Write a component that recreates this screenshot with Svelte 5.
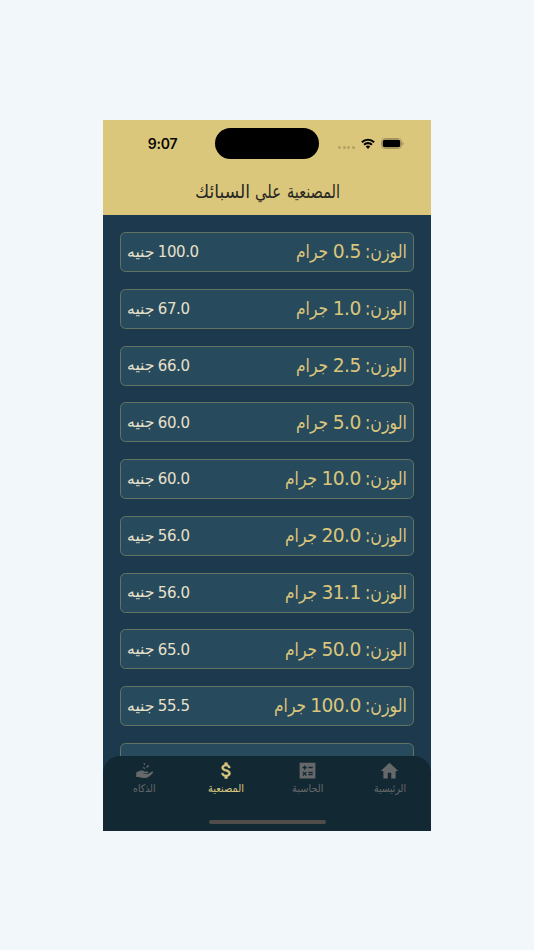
<script lang="ts">
	const rows = [
		{ weight: '0.5', price: '100.0' },
		{ weight: '1.0', price: '67.0' },
		{ weight: '2.5', price: '66.0' },
		{ weight: '5.0', price: '60.0' },
		{ weight: '10.0', price: '60.0' },
		{ weight: '20.0', price: '56.0' },
		{ weight: '31.1', price: '56.0' },
		{ weight: '50.0', price: '65.0' },
		{ weight: '100.0', price: '55.5' }
	]

	const tabs = [
		{ id: 'home', label: 'الرئيسية', width: 32 },
		{ id: 'calculator', label: 'الحاسبة', width: 31.5 },
		{ id: 'fees', label: 'المصنعية', width: 36 },
		{ id: 'zakat', label: 'الذكاه', width: 22.5 }
	]

	let active = 'fees'
</script>

<!-- one word fitted to a fixed width -->
{#snippet word(text: string, width: number)}
	<svg class="word" {width}>
		<text x={width} y="1em" textLength={width} lengthAdjust="spacingAndGlyphs">{text}</text>
	</svg>
{/snippet}

<main>
	<div class="phone">
		<header>
			<div class="statusBar">
				<span class="time">9:07</span>
				<div class="island"></div>
				<div class="signals">
					<div class="dots"><i></i><i></i><i></i><i></i></div>
					<svg class="wifi" viewBox="0 0 14 11">
						<path d="M.9 4.200a8.700 8.700 0 0 1 12.200 0M3.100 6.700a5.600 5.600 0 0 1 7.800 0" fill="none" stroke="#000" stroke-width="2.100" />
						<path d="M4.800 8.600a3.200 3.200 0 0 1 4.400 0L7 10.900z" />
					</svg>
					<svg class="battery" viewBox="0 0 23 11">
						<rect x=".5" y=".5" width="20" height="10" rx="3.200" fill="none" stroke="#a3945b" />
						<rect x="1.700" y="1.800" width="17.600" height="7.400" rx="2" />
						<path d="M21.500 4v3.400q1.300-.5 1.300-1.700T21.500 4z" fill="#a3945b" />
					</svg>
				</div>
			</div>
			<h1>
				{@render word('المصنعية', 53)}
				{@render word('علي', 26)}
				{@render word('السبائك', 55)}
			</h1>
		</header>

		<section class="list">
			{#each rows as row}
				<div class="row">
					<p class="weight">
						{@render word('الوزن:', 42)}
						<b>{row.weight}</b>
						{@render word('جرام', 32)}
					</p>
					<p class="price">
						<b>{row.price}</b>
						{@render word('جنيه', 27.5)}
					</p>
				</div>
			{/each}
			<div class="row"></div>
		</section>

		<nav>
			<div class="tabs">
				{#each tabs as tab}
					<button class="tab {tab.id}" class:active={active === tab.id} on:click={() => (active = tab.id)}>
						<svg class="icon" viewBox="0 0 24 24" fill="currentColor">
							{#if tab.id === 'home'}
								<path d="M10 21v-6.500h4V21h5v-8.500h3L12 3 2 12.500h3V21z" />
							{:else if tab.id === 'calculator'}
								<path
									fill-rule="evenodd"
									d="M3 3h18v18H3zM8 6.200v1.600H6.200v1.500H8V11h1.500V9.300h1.700V7.800H9.500V6.200zM13 7.800v1.500h5V7.800zM13 13.500V15h5v-1.500zM13 16v1.500h5V16zM6.200 14.200 7.700 15.700 6.200 17.200 7.200 18.200 8.700 16.700 10.200 18.200 11.200 17.200 9.700 15.700 11.200 14.200 10.200 13.200 8.700 14.700 7.200 13.200z"
								/>
							{:else if tab.id === 'fees'}
								<path
									d="M11.800 10.900c-2.270-.590-3-1.200-3-2.150 0-1.090 1.010-1.850 2.700-1.850 1.780 0 2.440.850 2.500 2.100h2.210c-.070-1.720-1.120-3.300-3.210-3.810V3h-3v2.160c-1.940.420-3.500 1.680-3.500 3.610 0 2.310 1.910 3.460 4.700 4.130 2.500.6 3 1.480 3 2.410 0 .690-.490 1.790-2.700 1.790-2.060 0-2.870-.920-2.980-2.100h-2.200c.120 2.190 1.760 3.420 3.680 3.830V21h3v-2.150c1.950-.370 3.500-1.500 3.500-3.550 0-2.840-2.430-3.810-4.700-4.400z"
									stroke="currentColor"
									stroke-width=".6"
								/>
							{:else}
								<path d="M2.500 14.300l4.200-1.900c2-.8 3.800-.6 5.300.6h3.200c1.500.1 1.500 1.500.3 1.800l-4.800.2v.6h5.500c1.300-.1 2.300-1.100 3.800-2.100.9-.6 2.500-.1 1.600 1.200-1.800 2.600-4.200 4.700-7.300 5.700-3.300.7-6.200.1-8.600-.9H2.500z" />
								<path d="M10.800 3q2.400.3 2.200 2.900-2.300-.4-2.200-2.900zM14.200 9q-.2-2.900 2.900-3.300 0 3-2.900 3.300zM10 7.700q2.700.1 3 2.900-2.700-.1-3-2.900z" />
							{/if}
						</svg>
						{@render word(tab.label, tab.width)}
					</button>
				{/each}
			</div>
			<div class="homeBar"></div>
		</nav>
	</div>
</main>

<style>
	:global(body) {
		background: #f2f7fa;
	}
	main {
		height: 950px;
		display: flex;
		align-items: center;
		justify-content: center;
		font-family: 'DejaVu Sans', sans-serif;
	}
	.phone {
		width: 327.5px;
		height: 711px;
		display: grid;
		grid-template-rows: 95.5px 1fr;
		grid-template-columns: 100%;
		overflow: hidden;
		background: #1d394d;
		direction: rtl;
	}
	.word {
		height: 1.5em;
		flex: none;
		overflow: visible;
		fill: currentColor;
	}
	header {
		background: #dbc77c;
	}
	.statusBar {
		direction: ltr;
		height: 48px;
		display: grid;
		grid-template-columns: 112px 104px 1fr;
		align-items: center;
	}
	.time {
		padding-left: 44.5px;
		font: 600 14px Inter, sans-serif;
		letter-spacing: -0.2px;
		color: #080804;
	}
	.island {
		height: 31px;
		border-radius: 16px;
		background: #000;
	}
	.signals {
		display: flex;
		align-items: center;
		padding-left: 19px;
	}
	.dots {
		display: flex;
		gap: 1.5px;
		margin: 7px 6px 0 0;
	}
	.dots i {
		width: 3px;
		height: 3px;
		border-radius: 50%;
		background: #b3a363;
	}
	.wifi {
		width: 14px;
		height: 11px;
		margin-right: 6px;
	}
	.battery {
		width: 23px;
		height: 11px;
	}
	h1 {
		margin: 11px 0 0;
		height: 28px;
		display: flex;
		justify-content: center;
		gap: 5.5px;
		font-size: 19px;
		font-weight: 400;
		color: #272823;
	}
	.list {
		grid-row: 2;
		grid-column: 1;
		padding: 17px 16.5px 0;
		display: flex;
		flex-direction: column;
		gap: 16.75px;
		overflow: hidden;
	}
	.row {
		box-sizing: border-box;
		height: 40px;
		flex: none;
		display: flex;
		align-items: center;
		justify-content: space-between;
		padding: 0 6px;
		border: 1px solid #647462;
		border-radius: 5.5px;
		background: #284a5d;
	}
	p {
		margin: 0;
		display: flex;
		white-space: nowrap;
	}
	b {
		font-weight: 400;
		line-height: 1;
	}
	.weight {
		gap: 4.5px;
		padding-top: 3px;
		font-size: 18.7px;
		color: #d9c57b;
	}
	.weight b {
		padding-top: 4px;
		letter-spacing: -0.6px;
	}
	.price {
		gap: 3.5px;
		padding-top: 2px;
		font-size: 15px;
		color: #e7e0cb;
	}
	.price b {
		padding-top: 3.5px;
		letter-spacing: -0.4px;
	}
	nav {
		grid-row: 2;
		grid-column: 1;
		align-self: end;
		z-index: 1;
		height: 74.5px;
		border-radius: 17px 17px 0 0;
		background: #122934;
	}
	.tabs {
		display: grid;
		grid-template-columns: repeat(4, 1fr);
		height: 64px;
	}
	.tab {
		padding: 4px 0 0;
		border: 0;
		background: none;
		font-family: inherit;
		font-size: 10.5px;
		display: flex;
		flex-direction: column;
		align-items: center;
		color: #67686a;
		cursor: pointer;
	}
	.icon {
		width: 21px;
		height: 21px;
	}
	.home .icon {
		margin-left: -1px;
	}
	.tab.active {
		color: #dbc77c;
	}
	.homeBar {
		width: 117px;
		height: 4px;
		margin: 0 auto;
		border-radius: 2px;
		background: #504c4b;
	}
</style>
